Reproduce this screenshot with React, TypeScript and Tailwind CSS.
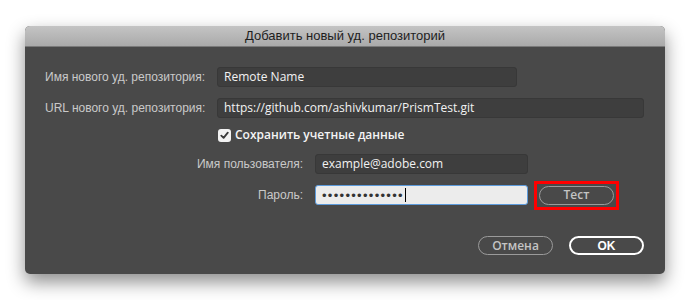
import React from "react";

function Field({ value, width }: { value: string; width: string }) {
  return (
    <div
      className={`h-[20px] ${width} rounded-[3px] border border-[#383838] bg-[#3e3e3e] px-[6px] flex items-center text-[12px] text-[#f2f2f2] font-['Open_Sans',sans-serif]`}
    >
      {value}
    </div>
  );
}

function PillButton({
  children,
  strong,
}: {
  children: React.ReactNode;
  strong?: boolean;
}) {
  return (
    <button
      className={
        strong
          ? "w-[75px] h-[19px] rounded-full border-2 border-white text-white text-[12px] font-bold leading-none"
          : "w-[75px] h-[19px] rounded-full border border-[#9a9a9a] text-[#c4c4c4] text-[12px] leading-none font-['Open_Sans',sans-serif] font-semibold"
      }
    >
      {children}
    </button>
  );
}

export default function App() {
  return (
    <div className="w-[690px] h-[300px] bg-white pt-[26px] pl-[25px] font-['Liberation_Sans',sans-serif]">
      <div className="w-[640px] h-[248px] rounded-[5px] overflow-hidden bg-[#494949] shadow-[0_8px_18px_rgba(0,0,0,0.45)] flex flex-col">
        {/* title bar */}
        <div className="h-[21px] shrink-0 bg-gradient-to-b from-[#c4c4c4] to-[#aaaaaa] border-b border-[#7a7a7a] flex items-center justify-center text-[13px] text-[#1e1e1e]">
          Добавить новый уд. репозиторий
        </div>

        <div className="flex flex-col pl-[20px] pt-[20px] text-[12px] text-[#c9c9c9]">
          <div className="flex items-center gap-[12px]">
            <span className="w-[160px] whitespace-nowrap">Имя нового уд. репозитория:</span>
            <Field value="Remote Name" width="w-[300px]" />
          </div>
          <div className="flex items-center gap-[12px] mt-[11px]">
            <span className="w-[160px] whitespace-nowrap">URL нового уд. репозитория:</span>
            <Field value="https://github.com/ashivkumar/PrismTest.git" width="w-[427px]" />
          </div>

          <div className="flex items-center h-[20px] mt-[7px] ml-[173px] gap-[4px]">
            <div className="w-[13px] h-[13px] rounded-[3px] bg-[#f2f2f2] flex items-center justify-center">
              <svg width="9" height="9" viewBox="0 0 9 9">
                <path d="M1.3 4.6 L3.6 6.9 L7.8 1.6" fill="none" stroke="#3a3a3a" strokeWidth="1.8" strokeLinecap="round" strokeLinejoin="round" />
              </svg>
            </div>
            <span className="text-[12px] text-[#f4f4f4] font-semibold font-['Open_Sans',sans-serif]">
              Сохранить учетные данные
            </span>
          </div>

          <div className="flex items-center gap-[12px] mt-[9px]">
            <span className="w-[258px] text-right">Имя пользователя:</span>
            <Field value="example@adobe.com" width="w-[213px]" />
          </div>
          <div className="flex items-center gap-[12px] mt-[11px] h-[20px]">
            <span className="w-[258px] text-right">Пароль:</span>
            <div className="w-[213px] h-[20px] rounded-[3px] border border-[#5d9bdc] bg-[#ececec] px-[6px] flex items-center text-[13px] leading-none text-[#333] tracking-[1.3px]">
              ••••••••••••••
              <span className="ml-[1px] w-[1px] h-[14px] bg-black" />
            </div>
            <div className="-ml-[6px] border-[3px] border-[#ff0000] px-[2px] py-[2px] flex items-center">
              <PillButton>Тест</PillButton>
            </div>
          </div>

          <div className="flex justify-end gap-[16px] pr-[21px] mt-[31px]">
            <PillButton>Отмена</PillButton>
            <PillButton strong>OK</PillButton>
          </div>
        </div>
      </div>
    </div>
  );
}
